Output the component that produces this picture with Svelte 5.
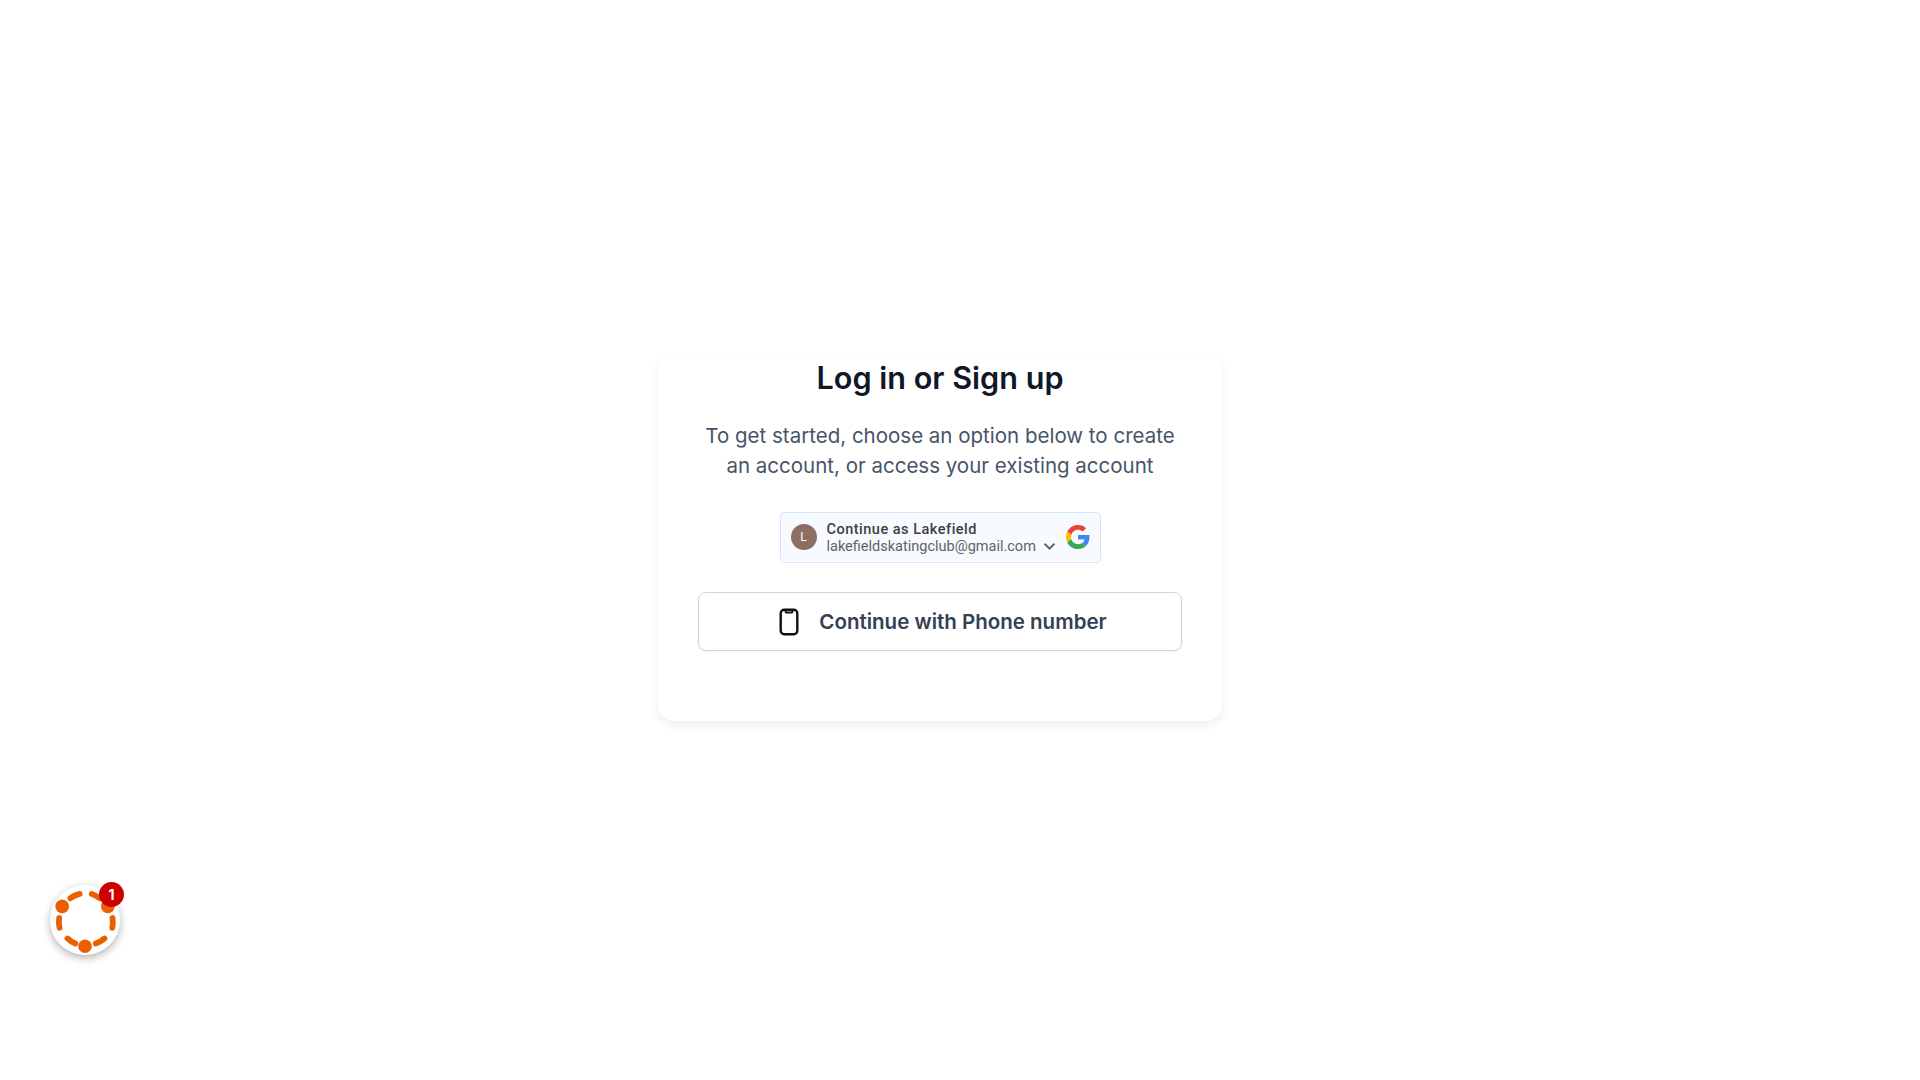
<script>
  let title = 'Log in or Sign up';
</script>

<div class="page">
  <div class="card">
    <h1>{title}</h1>
    <p class="intro">To get started, choose an option below to create<br />an account, or access your existing account</p>

    <div class="google">
      <span class="avatar">L</span>
      <div class="who">
        <div class="name">Continue as Lakefield</div>
        <div class="mail-row">
          <span class="mail">lakefieldskatingclub@gmail.com</span>
          <svg class="chev" viewBox="0 0 12 12" width="13" height="13"><path d="M1.5 3.5 6 8l4.5-4.5" fill="none" stroke="#5f6368" stroke-width="1.8" /></svg>
        </div>
      </div>
      <svg class="g" viewBox="0 0 48 48" width="24" height="24">
        <path fill="#EA4335" d="M24 9.5c3.54 0 6.71 1.22 9.21 3.6l6.85-6.85C35.9 2.38 30.47 0 24 0 14.62 0 6.51 5.38 2.56 13.22l7.98 6.19C12.43 13.72 17.74 9.5 24 9.5z" />
        <path fill="#4285F4" d="M46.98 24.55c0-1.57-.15-3.09-.38-4.55H24v9.02h12.94c-.58 2.96-2.26 5.48-4.78 7.18l7.73 6c4.51-4.18 7.09-10.36 7.09-17.65z" />
        <path fill="#FBBC05" d="M10.53 28.59c-.48-1.45-.76-2.99-.76-4.59s.27-3.14.76-4.59l-7.98-6.19C.92 16.46 0 20.12 0 24c0 3.88.92 7.54 2.56 10.78l7.97-6.19z" />
        <path fill="#34A853" d="M24 48c6.48 0 11.93-2.13 15.89-5.81l-7.73-6c-2.15 1.45-4.92 2.3-8.16 2.3-6.26 0-11.57-4.22-13.47-9.91l-7.98 6.19C6.51 42.62 14.62 48 24 48z" />
      </svg>
    </div>

    <button class="phone">
      <svg viewBox="0 0 24 28" width="24" height="28" fill="none" stroke="#111" stroke-width="2.4">
        <rect x="3.7" y="1.7" width="16.6" height="24.6" rx="3.5" />
        <path d="M8.5 2.5v1.2c0 .5.3.8.8.8h5.4c.5 0 .8-.3.8-.8V2.5" stroke-width="1.8" />
      </svg>
      <span>Continue with Phone number</span>
    </button>
  </div>
</div>

<div class="launcher">
  <svg viewBox="0 0 72 72" width="70" height="70">
    <g fill="none" stroke="#ea6000" stroke-width="6" stroke-linecap="round">
      <path d="M21 13.6A27 27 0 0 1 30.5 9.2" />
      <path d="M43 9.2A27 27 0 0 1 51 13.6" />
      <path d="M64.3 34A28 28 0 0 1 64.1 44" />
      <path d="M9.4 34A28 28 0 0 0 9.8 44" />
      <path d="M18 55A27 27 0 0 0 26 60.2" />
      <path d="M47 60.2A27 27 0 0 0 56 55" />
    </g>
    <circle cx="12.5" cy="22" r="7" fill="#ea6000" />
    <circle cx="59.5" cy="22" r="7" fill="#ea6000" />
    <circle cx="36" cy="63" r="7" fill="#ea6000" />
  </svg>
  <span class="badge">1</span>
</div>

<style>
  :global(body) {
    background: #fff;
    font-family: Inter, "Liberation Sans", sans-serif;
  }

  .page {
    height: 1080px;
    padding: 355px 40px 0 0;
    box-sizing: border-box;
    display: flex;
    justify-content: center;
  }

  .card {
    width: 564px;
    height: 366px;
    box-sizing: border-box;
    padding: 0 40px;
    background: #fff;
    border-radius: 16px;
    box-shadow: 0 4px 10px rgba(0, 0, 0, 0.07);
    display: flex;
    flex-direction: column;
    align-items: center;
  }

  h1 {
    margin: 4px 0 0;
    font-size: 30.6px;
    line-height: 38px;
    font-weight: 600;
    color: #101828;
    text-align: center;
  }

  .intro {
    margin: 24px 0 0;
    font-size: 20.5px;
    line-height: 30px;
    color: #475467;
    text-align: center;
  }

  .google {
    margin-top: 31px;
    width: 321px;
    height: 51px;
    box-sizing: border-box;
    padding: 0 10px;
    background: #f7faff;
    border: 1px solid #d7e5fb;
    border-radius: 4px;
    display: flex;
    align-items: center;
    font-family: Roboto, sans-serif;
  }

  .avatar {
    width: 26px;
    height: 26px;
    border-radius: 50%;
    background: #8d6e63;
    color: #fff;
    font-size: 12px;
    display: flex;
    align-items: center;
    justify-content: center;
    flex: none;
    margin-bottom: 2px;
  }

  .g {
    margin-bottom: 2px;
  }

  .who {
    margin-left: 10px;
    flex: 1;
  }

  .name {
    font-size: 14.5px;
    line-height: 17px;
    font-weight: 500;
    letter-spacing: 0.5px;
    color: #3c4043;
  }

  .mail-row {
    display: flex;
    align-items: center;
    gap: 7px;
  }

  .mail {
    font-size: 14.5px;
    line-height: 17px;
    color: #5f6368;
  }

  .phone {
    margin-top: 29px;
    width: 484px;
    height: 59px;
    background: #fff;
    border: 1px solid #d0d5dd;
    border-radius: 8px;
    box-shadow: 0 1px 2px rgba(16, 24, 40, 0.05);
    display: flex;
    align-items: center;
    justify-content: center;
    gap: 18px;
    font-family: inherit;
    font-size: 20.5px;
    font-weight: 600;
    color: #344054;
    padding: 0 0 0 4px;
  }

  .launcher {
    position: fixed;
    left: 50px;
    top: 885px;
    width: 70px;
    height: 70px;
    border-radius: 50%;
    background: #fff;
    box-shadow: 0 3px 8px rgba(0, 0, 0, 0.3);
  }

  .launcher svg {
    display: block;
  }

  .badge {
    position: absolute;
    top: -3px;
    left: 49px;
    width: 25px;
    height: 25px;
    border-radius: 50%;
    background: #cc0000;
    color: #fff;
    font-size: 14px;
    font-weight: 700;
    display: flex;
    align-items: center;
    justify-content: center;
  }
</style>
